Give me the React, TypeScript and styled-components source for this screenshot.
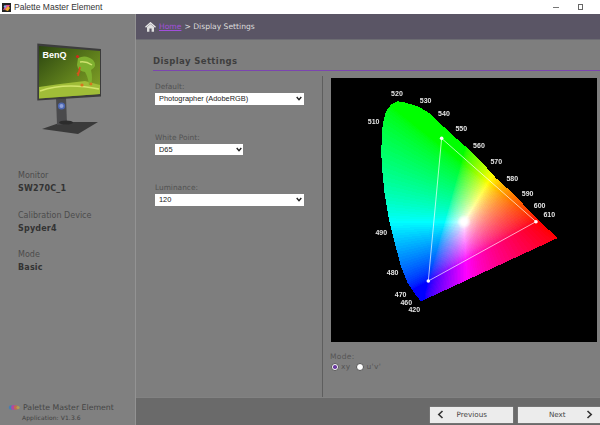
import React, { useMemo } from "react";
import styled, { createGlobalStyle } from "styled-components";

const chevronUri = `url("data:image/svg+xml,%3Csvg xmlns='http://www.w3.org/2000/svg' width='6' height='5' viewBox='0 0 6 5'%3E%3Cpath d='M0.7 1 L3 3.6 L5.3 1' fill='none' stroke='%23222' stroke-width='1.4'/%3E%3C/svg%3E")`;

const Global = createGlobalStyle`
  html, body { margin: 0; padding: 0; background: #fff; }
  * { box-sizing: border-box; }
`;

const Window = styled.div`
  width: 600px; height: 425px; overflow: hidden;
  display: flex; flex-direction: column;
  font-family: "DejaVu Sans", sans-serif;
`;
const TitleBar = styled.div`
  height: 14px; flex: none; background: #fff; display: flex; align-items: center;
  padding-left: 2px; gap: 3px; position: relative;
`;
const TitleText = styled.span`
  font: 8.5px "Liberation Sans", sans-serif; color: #333; position: relative; top: -0.5px;
`;
const WinButtons = styled.div`
  margin-left: auto; display: flex; align-items: center; gap: 19px; padding-right: 17px;
`;
const MinBtn = styled.span`width: 6px; height: 1px; background: #777;`;
const MaxBtn = styled.span`width: 5px; height: 6px; border: 1px solid #666;`;
const Body = styled.div`flex: 1; display: flex; min-height: 0;`;
const Sidebar = styled.aside`
  width: 136px; flex: none; background: #808080; border-right: 1px solid #939393;
  display: flex; flex-direction: column; padding-top: 21px;
`;
const MonitorSvg = styled.svg`display: block; margin-left: 20px; width: 90px; height: 100px; flex: none;`;
const InfoList = styled.div`
  margin-top: 36px; padding-left: 18px; display: flex; flex-direction: column; gap: 16.5px;
`;
const InfoItem = styled.div`display: flex; flex-direction: column; gap: 3px;`;
const InfoLabel = styled.span`font-size: 8px; line-height: 10px; color: #4c4c4c;`;
const InfoValue = styled.span`font-size: 8px; line-height: 10px; color: #333; font-weight: 700; letter-spacing: 0.2px;`;
const Brand = styled.div`
  margin-top: auto; padding: 0 0 2px 8px; display: flex; flex-direction: column;
`;
const BrandRow = styled.div`display: flex; align-items: center; gap: 3px;`;
const BrandName = styled.span`font-size: 7.8px; line-height: 11px; color: #444;`;
const BrandVersion = styled.span`font-size: 6px; line-height: 10px; color: #3f3f3f; padding-left: 14px; letter-spacing: 0.1px;`;

const Main = styled.main`flex: 1; display: flex; flex-direction: column; min-width: 0; background: #7e7e7e;`;
const Crumbs = styled.nav`
  height: 26px; flex: none; background: #5a5565; display: flex; align-items: center;
  padding-left: 9px; font-size: 7.6px; color: #dcdcdc; border-bottom: 1px solid #6c6c72;
`;
const HomeLink = styled.a`
  color: #a24fdc; text-decoration: underline; margin: 0 3px 0 3px;
`;
const Content = styled.section`flex: 1; min-height: 0; padding: 14px 0 0 17px; display: flex; flex-direction: column;`;
const Heading = styled.h1`
  margin: 0; font-size: 8.5px; line-height: 15px; font-weight: 700; color: #3e3e3e; letter-spacing: 0.4px;
  border-bottom: 1.5px solid #7b45b0; height: 17px; flex: none;
`;
const Columns = styled.div`flex: 1; display: flex; min-height: 0; padding-top: 5px;`;
const FormCol = styled.div`
  width: 170px; flex: none; border-right: 1.5px solid #5e5e5e; padding: 5px 0 0 2px;
  display: flex; flex-direction: column; gap: 27px;
`;
const Field = styled.label`display: flex; flex-direction: column; gap: 1px; font-size: 7.4px; line-height: 11px; color: #525252;`;
const Select = styled.select<{ $w: number }>`
  appearance: none; width: ${(p) => p.$w}px; height: 11.5px; border: 0; border-radius: 0; color: #222;
  background: #fff ${chevronUri} no-repeat right 1.5px center;
  padding: 0 0 0 4px; margin: 0; font: 7.4px/11px "Liberation Sans", sans-serif; outline: none;
`;
const ChartCol = styled.div`flex: 1; padding: 2px 2px 0 8px; display: flex; flex-direction: column; min-width: 0;`;
const ChartPanel = styled.div`width: 266px; height: 264px; background: #000; flex: none;`;
const ChartSvg = styled.svg`display: block; width: 266px; height: 264px;`;
const ModeBox = styled.div`margin-top: 10px; margin-left: -1px; font-size: 7.5px; line-height: 10px; color: #555; letter-spacing: 0.3px;`;
const ModeRow = styled.div`display: flex; align-items: center; padding-left: 1px;`;
const ModeOption = styled.span`display: flex; align-items: center; gap: 2px; margin-right: 6px;`;
const Radio = styled.span<{ $on?: boolean }>`
  width: 8px; height: 8px; border-radius: 50%; background: #fff; border: 1px solid #555;
  display: flex; align-items: center; justify-content: center;
  &::after { content: ""; width: 3.5px; height: 3.5px; border-radius: 50%; background: ${(p) => (p.$on ? "#6a3aa0" : "transparent")}; }
`;
const Footer = styled.footer`
  height: 28px; flex: none; background: #6a6a6a; border-top: 1px solid #828282;
  display: flex; justify-content: flex-end; align-items: flex-start; gap: 5px; padding-top: 9px;
`;
const NavButton = styled.button`
  width: 82.5px; height: 15.5px; border: 0; background: #ececec; padding: 0 7px; color: #444;
  display: flex; align-items: center;
  font: 7.2px "DejaVu Sans", sans-serif; box-shadow: 0 0 1px #aaa;
`;
const NavLabel = styled.span<{ $shift: number }>`
  flex: 1; text-align: center;
  padding-left: ${(p) => Math.max(p.$shift, 0)}px; padding-right: ${(p) => Math.max(-p.$shift, 0)}px;
`;
const Chevron = styled.svg`width: 7px; height: 9px; flex: none;`;
const ChartLabels = styled.g`filter: grayscale(1);`;

// outline of the diagram, traced in 3x crop coordinates
const OUTLINE = [
  [205,80],[225,83],[250,90],[270,97],[300,115],[340,153],[380,190],[420,225],[460,265],[500,310],[550,355],[600,408],[640,448],[685,490],
  [275,680],[255,655],[235,625],[215,575],[195,500],[178,430],[165,350],[157,270],[156,220],[160,150],[170,110],[185,90],
].map(([x, y]) => [x / 3 - 1.7, y / 3 - 3.3]);

const inside = (px: number, py: number) => {
  let c = false;
  for (let i = 0, j = OUTLINE.length - 1; i < OUTLINE.length; j = i++) {
    const [xi, yi] = OUTLINE[i];
    const [xj, yj] = OUTLINE[j];
    if (yi > py !== yj > py && px < ((xj - xi) * (py - yi)) / (yj - yi) + xi) c = !c;
  }
  return c;
};

const colourAt = (px: number, py: number) => {
  const x = (px + 331.7 - 396) / 220;
  const y = (294.5 - (py + 78.3)) / 219.7;
  const yy = Math.max(y, 0.002);
  const X = x / yy;
  const Z = (1 - x - yy) / yy;
  let r = 3.2406 * X - 1.5372 - 0.4986 * Z;
  let g = -0.9689 * X + 1.8758 + 0.0415 * Z;
  let b = 0.0557 * X - 0.204 + 1.057 * Z;
  r = Math.max(r, 0); g = Math.max(g, 0); b = Math.max(b, 0);
  const m = Math.max(r, g, b, 1e-6);
  const q = (v: number) => Math.round(Math.pow(v / m, 1 / 1.6) * 31) * 8.226;
  return `rgb(${Math.round(q(r))},${Math.round(q(g))},${Math.round(q(b))})`;
};

const LABELS: [string, number, number][] = [
  ["520",203,57],["530",289,77],["540",344,116],["550",396,161],["560",449,211],["570",501,261],["580",549,310],
  ["590",595,356],["600",631,392],["610",660,420],["510",133,139],["490",156,473],["480",190,593],["470",214,658],["460",231,684],["420",255,703],
];
const pt = (x: number, y: number) => [x / 3 - 1.7, y / 3 - 3.3];
const R = pt(620, 441), G = pt(337, 191), B = pt(297, 619), W = pt(404, 441);

function Diagram() {
  const runs = useMemo(() => {
    const out: { x: number; y: number; w: number; fill: string }[] = [];
    for (let y = 20; y < 226; y++) {
      let cur: { x: number; y: number; w: number; fill: string } | null = null;
      for (let x = 45; x < 226; x++) {
        if (!inside(x + 0.5, y + 0.5)) { cur = null; continue; }
        const fill = colourAt(x + 0.5, y + 0.5);
        if (cur && cur.fill === fill) cur.w++;
        else { cur = { x, y, w: 1, fill }; out.push(cur); }
      }
    }
    return out;
  }, []);
  return (
    <ChartSvg viewBox="0 0 266 264">
      <defs>
        <radialGradient id="glow">
          <stop offset="0" stopColor="#fff" />
          <stop offset="0.4" stopColor="#fff" stopOpacity="0.9" />
          <stop offset="1" stopColor="#fff" stopOpacity="0" />
        </radialGradient>
      </defs>
      <g shapeRendering="crispEdges">
        {runs.map((r, i) => <rect key={i} x={r.x} y={r.y} width={r.w} height={1.05} fill={r.fill} />)}
      </g>
      <circle cx={W[0]} cy={W[1]} r={7} fill="url(#glow)" />
      <polygon points={[R, G, B].map((p) => p.join(",")).join(" ")} fill="none" stroke="#fff" strokeOpacity="0.75" strokeWidth="0.9" />
      {[R, G, B].map((p, i) => <circle key={i} cx={p[0]} cy={p[1]} r={1.8} fill="#fff" />)}
      <ChartLabels>
        {LABELS.map(([t, x, y]) => (
          <text key={t} x={x / 3 - 1.7} y={y / 3 - 0.7} textAnchor="middle" fontFamily="Liberation Sans, sans-serif" fontSize="7" fontWeight="700" fill="#e4e4e4">{t}</text>
        ))}
      </ChartLabels>
    </ChartSvg>
  );
}

function Monitor() {
  return (
    <MonitorSvg viewBox="0 0 90 100">
      <defs>
        <linearGradient id="scr" x1="0" y1="0" x2="1" y2="1">
          <stop offset="0" stopColor="#2a4410" />
          <stop offset="0.55" stopColor="#5f7f1c" />
          <stop offset="1" stopColor="#8aa82a" />
        </linearGradient>
      </defs>
      <polygon points="22,94 42,87 78,87 58,99" fill="#3a3a3a" />
      <polygon points="36,62 46,62 47,89 37,90" fill="#4a4a4c" />
      <circle cx="41.5" cy="71" r="3.6" fill="#4c66b0" />
      <circle cx="41.5" cy="71" r="2" fill="#8ea0d8" />
      <ellipse cx="46" cy="87.5" rx="7" ry="2" fill="#2c2c2c" />
      <polygon points="17.3,8.5 81,14 81,61.5 17.3,65.5" fill="#3c3c3c" />
      <polygon points="19,11 80,16 80,59 19,63.5" fill="url(#scr)" />
      <polygon points="19,52 40,49 65,46 80,50 80,59 19,63.5" fill="#a0bd38" />
      <path d="M20 56 Q45 47 79 54" stroke="#d2e46a" strokeWidth="1.5" fill="none" />
      <path d="M58 23 Q66 19 73 25 Q78 31 71 35 Q73 43 71 50 L69 50 Q68 42 65 37 Q58 36 57 30 Z" fill="#7fb02f" />
      <path d="M60 27 Q66 26 72 30" stroke="#cfe26e" strokeWidth="1.5" fill="none" />
      <circle cx="57.5" cy="21.5" r="1.6" fill="#d02a1c" />
      <path d="M60 32 L58 41 M57 39 L60 36" stroke="#d6521c" strokeWidth="1.6" fill="none" />
      <circle cx="62" cy="50" r="1.6" fill="#d9741f" />
      <circle cx="71" cy="49" r="1.4" fill="#d9741f" />
      <text x="22.5" y="22.5" fontFamily="Liberation Sans, sans-serif" fontSize="9" fontWeight="700" fill="#fff">BenQ</text>
    </MonitorSvg>
  );
}

const Back = () => <Chevron viewBox="0 0 7 9"><path d="M5.5 1 L1.8 4.5 L5.5 8" fill="none" stroke="#333" strokeWidth="1.6" /></Chevron>;
const Fwd = () => <Chevron viewBox="0 0 7 9"><path d="M1.5 1 L5.2 4.5 L1.5 8" fill="none" stroke="#333" strokeWidth="1.6" /></Chevron>;

export default function App() {
  return (
    <Window>
      <Global />
      <TitleBar>
        <svg width="9" height="9" viewBox="0 0 9 9">
          <rect width="9" height="9" fill="#222" />
          <path d="M1 7 L4 2 L8 2 L6 6 Z" fill="#e0509a" />
          <path d="M3 7 L6 3 L8 5 L6 8 Z" fill="#f0b030" />
          <circle cx="3" cy="3.5" r="1.2" fill="#7fb0f0" />
        </svg>
        <TitleText>Palette Master Element</TitleText>
        <WinButtons><MinBtn /><MaxBtn /></WinButtons>
      </TitleBar>
      <Body>
        <Sidebar>
          <Monitor />
          <InfoList>
            <InfoItem><InfoLabel>Monitor</InfoLabel><InfoValue>SW270C_1</InfoValue></InfoItem>
            <InfoItem><InfoLabel>Calibration Device</InfoLabel><InfoValue>Spyder4</InfoValue></InfoItem>
            <InfoItem><InfoLabel>Mode</InfoLabel><InfoValue>Basic</InfoValue></InfoItem>
          </InfoList>
          <Brand>
            <BrandRow>
              <svg width="12" height="7" viewBox="0 0 12 7">
                <circle cx="3" cy="3.5" r="2.2" fill="#4a7fb0" />
                <circle cx="5.5" cy="3.5" r="2.4" fill="#b04aa0" />
                <circle cx="8" cy="3.5" r="2.2" fill="#c06a50" />
                <circle cx="10" cy="3.5" r="1.6" fill="#b0a050" />
              </svg>
              <BrandName>Palette Master Element</BrandName>
            </BrandRow>
            <BrandVersion>Application: V1.3.6</BrandVersion>
          </Brand>
        </Sidebar>
        <Main>
          <Crumbs>
            <svg width="11" height="10" viewBox="0 0 11 10">
              <path d="M0.5 5.2 L5.5 0.8 L10.5 5.2" fill="none" stroke="#e8e8e8" strokeWidth="1.4" />
              <path d="M2 5 L5.5 2 L9 5 V9.7 H6.6 V6.5 H4.4 V9.7 H2 Z" fill="#e0e0e0" />
            </svg>
            <HomeLink>Home</HomeLink>&gt; Display Settings
          </Crumbs>
          <Content>
            <Heading>Display Settings</Heading>
            <Columns>
              <FormCol>
                <Field>Default:
                  <Select $w={148.5} defaultValue="a"><option value="a">Photographer (AdobeRGB)</option></Select>
                </Field>
                <Field>White Point:
                  <Select $w={88} defaultValue="a"><option value="a">D65</option></Select>
                </Field>
                <Field>Luminance:
                  <Select $w={148.5} defaultValue="a"><option value="a">120</option></Select>
                </Field>
              </FormCol>
              <ChartCol>
                <ChartPanel><Diagram /></ChartPanel>
                <ModeBox>
                  Mode:
                  <ModeRow>
                    <ModeOption><Radio $on />xy</ModeOption>
                    <ModeOption><Radio />u'v'</ModeOption>
                  </ModeRow>
                </ModeBox>
              </ChartCol>
            </Columns>
          </Content>
          <Footer>
            <NavButton><Back /><NavLabel $shift={-6}>Previous</NavLabel></NavButton>
            <NavButton><NavLabel $shift={4}>Next</NavLabel><Fwd /></NavButton>
          </Footer>
        </Main>
      </Body>
    </Window>
  );
}
